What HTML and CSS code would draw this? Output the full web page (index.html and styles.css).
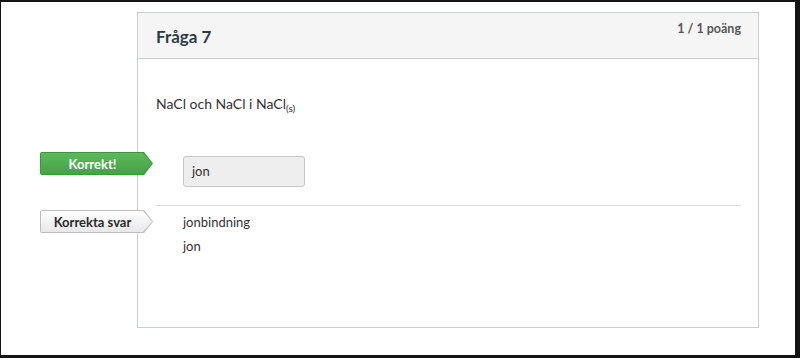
FILE: index.html
```html
<!DOCTYPE html>
<html lang="sv">
<head>
<meta charset="utf-8">
<title>Fråga 7</title>
<link rel="stylesheet" href="styles.css">
</head>
<body>
<div class="screen">
  <div class="card">
    <div class="card-header">
      <h2 class="title">Fråga 7</h2>
      <div class="points">1 / 1 poäng</div>
    </div>
    <div class="card-body">
      <p class="question">NaCl och NaCl i NaCl<sub>(s)</sub></p>
      <div class="answer-row">
        <span class="tag tag-correct">Korrekt!</span>
        <div class="given">jon</div>
      </div>
      <div class="divider"></div>
      <div class="answer-row answer-list">
        <span class="tag tag-answers">Korrekta svar</span>
        <div class="answer">jonbindning</div>
        <div class="answer">jon</div>
      </div>
    </div>
  </div>
</div>
</body>
</html>
```
FILE: styles.css
```css
* { box-sizing: border-box; }
html, body { margin: 0; padding: 0; }
body {
  background: #141414;
  font-family: Lato, "Open Sans", sans-serif;
  color: #2d3b45;
}
.screen {
  margin: 2px 5px 0 1px;
  height: 353px;
  background: #fff;
  padding-top: 10px;
  padding-left: 136px;
}
.card {
  position: relative;
  width: 622px;
  height: 316px;
  border: 1px solid #c9ced2;
}
.card-header {
  height: 46px;
  background: #f5f5f5;
  border-bottom: 1px solid #c9ced2;
  display: flex;
  justify-content: space-between;
  align-items: flex-start;
  padding: 0 17px 0 18px;
}
.title {
  margin: 14px 0 0;
  font-size: 17px;
  line-height: 20px;
  font-weight: 700;
  color: #2d3b45;
}
.points {
  margin-top: 8px;
  font-size: 12.5px;
  line-height: 16px;
  font-weight: 700;
  color: #555;
}
.card-body {
  padding: 35px 17px 0 18px;
}
.question {
  margin: 0;
  font-size: 14px;
  line-height: 20px;
  color: #333;
}
.question sub {
  font-size: 10px;
  vertical-align: -3px;
  line-height: 0;
}
.answer-row {
  position: relative;
  padding-left: 27px;
}
.answer-row:first-of-type { margin-top: 42px; }
.given {
  width: 122px;
  height: 31px;
  border: 1px solid #c8c8c8;
  border-radius: 3px;
  background: #eeeeee;
  padding-left: 8px;
  font-size: 13px;
  line-height: 29px;
  color: #333;
}
.divider {
  margin-top: 18px;
  border-top: 1px solid #dcdcdc;
}
.answer-list { padding-top: 4px; }
.answer {
  font-size: 13px;
  line-height: 24px;
  color: #333;
}
.tag {
  position: absolute;
  left: -116px;
  width: 113px;
  height: 23px;
  padding-right: 8px;
  display: flex;
  align-items: center;
  justify-content: center;
  font-size: 13px;
  font-weight: 700;
  clip-path: polygon(0 0, calc(100% - 9px) 0, 100% 50%, calc(100% - 9px) 100%, 0 100%);
  border-radius: 2px 0 0 2px;
  z-index: 1;
}
.tag::before {
  content: "";
  position: absolute;
  inset: 1px;
  clip-path: polygon(0 0, calc(100% - 9px) 0, 100% 50%, calc(100% - 9px) 100%, 0 100%);
  z-index: -1;
}
.tag-correct {
  top: -4px;
  background: #3a963a;
  color: #fff;
}
.tag-correct::before {
  background: linear-gradient(#5cb85c, #44a344);
}
.tag-answers {
  top: 4px;
  background: #bdbdbd;
  color: #2b2b2b;
}
.tag-answers::before {
  background: linear-gradient(#ffffff, #e8e8e8);
}
```
